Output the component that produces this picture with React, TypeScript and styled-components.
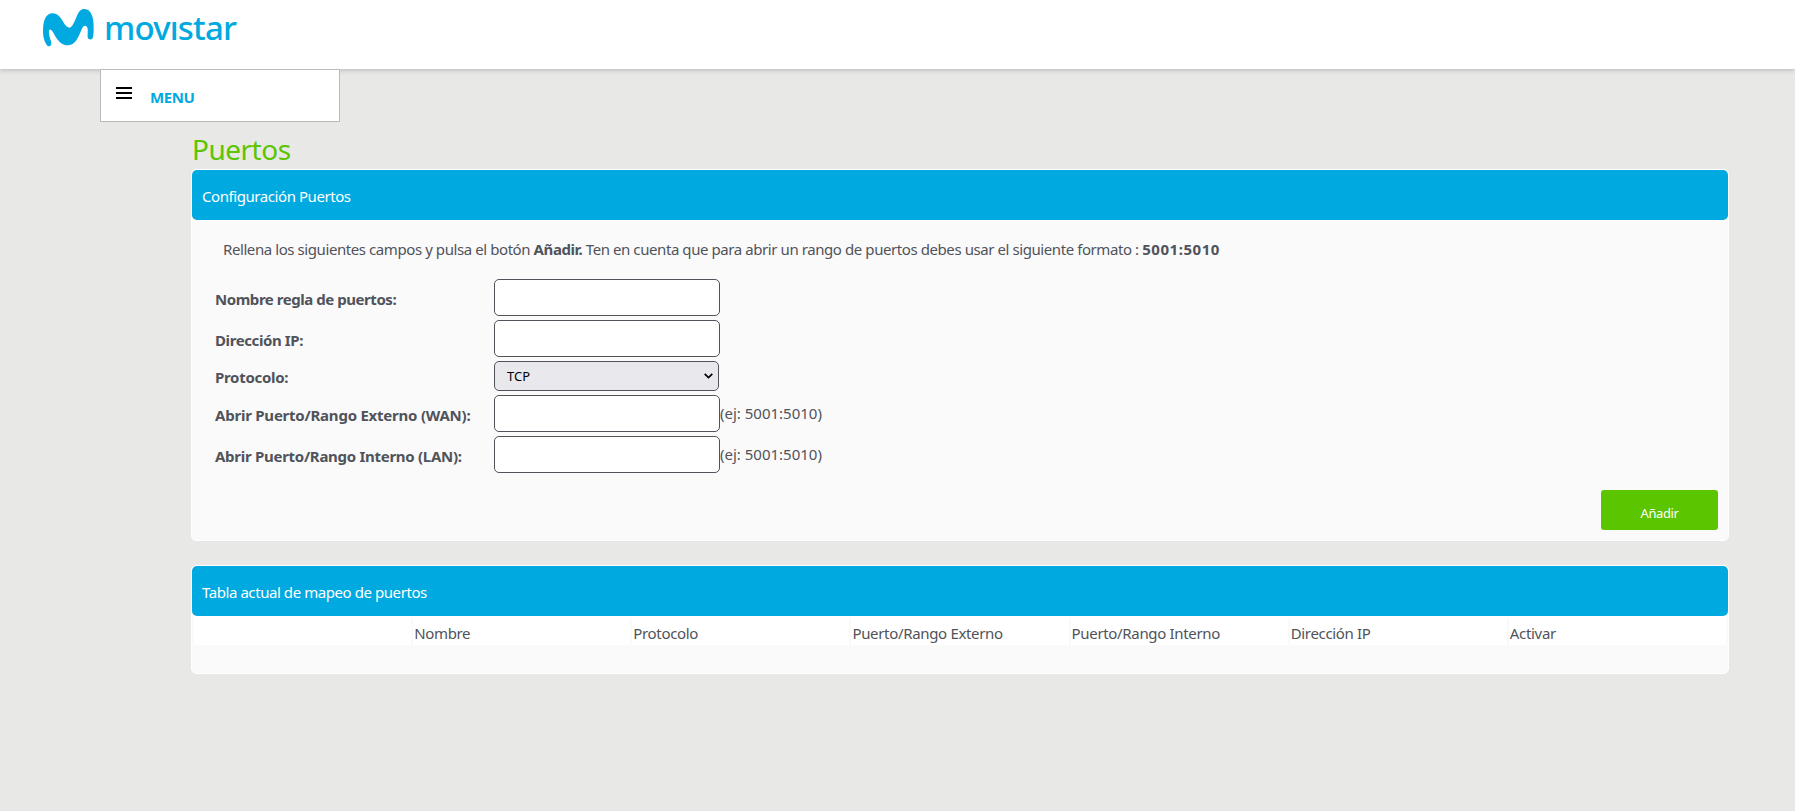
import React from "react";
import styled, { createGlobalStyle } from "styled-components";

const GlobalStyle = createGlobalStyle`
  * { box-sizing: border-box; }
  body {
    margin: 0;
    background: #e8e8e6;
    font-family: "Noto Sans", "Open Sans", sans-serif;
    font-size: 15px;
    color: #50535a;
  }
`;

const Page = styled.div`
  min-height: 811px;
`;

const TopBar = styled.header`
  height: 69px;
  display: flex;
  align-items: flex-start;
  padding: 0 0 0 42px;
  background: #fff;
  box-shadow: 0 1px 5px rgba(0, 0, 0, 0.22);
`;

const LogoMark = styled.svg`
  width: 54px;
  height: 48px;
  display: block;
`;

const Wordmark = styled.span`
  margin: 5px 0 0 8px;
  font-size: 33px;
  line-height: 45px;
  font-weight: 500;
  letter-spacing: -0.8px;
  color: #00a9e0;
`;

const MenuBox = styled.nav`
  position: relative;
  width: 240px;
  height: 53px;
  margin-left: 100px;
  padding: 0 0 0 15px;
  display: flex;
  background: #fff;
  border: 1px solid #bbb;
`;

const Burger = styled.span`
  width: 16px;
  height: 12px;
  margin-top: 17px;
  display: flex;
  flex-direction: column;
  justify-content: space-between;
  &::before, &::after { content: ""; }
  i, &::before, &::after { height: 2px; background: #000; }
`;

const MenuLabel = styled.span`
  margin: 16px 0 0 18px;
  font-weight: 700;
  line-height: 22px;
  letter-spacing: -0.4px;
  color: #00a9e0;
`;

const Main = styled.main`
  width: 1538px;
  margin-left: 191px;
`;

const Title = styled.h1`
  margin: 0;
  height: 47px;
  padding: 7px 0 0 1px;
  font-size: 28px;
  line-height: 40px;
  font-weight: 400;
  letter-spacing: -0.5px;
  color: #5bc500;
`;

const Panel = styled.section<{ $height: number }>`
  height: ${(p) => p.$height}px;
  margin-bottom: 24px;
  background: #fafafa;
  border: 1px solid #fff;
  border-radius: 5px;
`;

const PanelTitle = styled.h2`
  margin: 0;
  height: 50px;
  padding: 1px 0 0 10px;
  border-radius: 5px;
  background: #00a9e0;
  color: #fff;
  font-size: 15px;
  line-height: 50px;
  font-weight: 400;
  letter-spacing: -0.43px;
`;

const Intro = styled.p`
  margin: 0;
  padding: 17px 0 0 31px;
  height: 58px;
  line-height: 24px;
  letter-spacing: -0.42px;
  white-space: nowrap;
`;

const PortRange = styled.b`
  letter-spacing: 0.55px;
`;

const Field = styled.div<{ $short?: boolean }>`
  display: flex;
  align-items: flex-start;
  height: ${(p) => (p.$short ? 34 : 41)}px;
  padding-left: 23px;
`;

const Label = styled.label<{ $short?: boolean; $tracking?: number }>`
  width: 279px;
  padding-top: ${(p) => (p.$short ? 5 : 9)}px;
  line-height: 24px;
  font-weight: 700;
  letter-spacing: ${(p) => p.$tracking ?? -0.4}px;
  white-space: nowrap;
`;

const Input = styled.input`
  width: 226px;
  height: 37px;
  margin: 1px 0 0;
  background: #fff;
  border: 1px solid #50535a;
  border-radius: 5px;
`;

const Select = styled.div`
  width: 225px;
  height: 30px;
  margin-top: 1px;
  padding: 0 5px 0 12px;
  display: flex;
  align-items: center;
  justify-content: space-between;
  background: #e9e9ed;
  border: 1px solid #50535a;
  border-radius: 5px;
  color: #000;
  font-size: 13px;
`;

const Hint = styled.span`
  padding-top: 7px;
  line-height: 24px;
  letter-spacing: 0;
`;

const Actions = styled.div`
  display: flex;
  justify-content: flex-end;
  padding: 14px 10px 0 0;
`;

const AddButton = styled.button`
  width: 117px;
  height: 40px;
  padding: 6px 0 0;
  border: 0;
  border-radius: 3px;
  background: #5bc500;
  color: #fff;
  font: 400 13px "Noto Sans", sans-serif;
  letter-spacing: -0.4px;
`;

const HeadRow = styled.div`
  height: 27px;
  margin: 2px 2px 0;
  display: grid;
  grid-template-columns: repeat(7, 1fr);
  gap: 2px;
  box-shadow: 0 -2px 0 #fff;
`;

const HeadCell = styled.div`
  height: 27px;
  padding: 4px 0 0 1px;
  background: #fff;
  line-height: 22px;
  letter-spacing: -0.33px;
  white-space: nowrap;
`;

const columns = ["", "Nombre", "Protocolo", "Puerto/Rango Externo", "Puerto/Rango Interno", "Dirección IP", "Activar"];

export default function App() {
  return (
    <Page>
      <GlobalStyle />
      <TopBar>
        <LogoMark viewBox="126 0 162 144">
          <path
            fill="#00a9e0"
            d="M129 95C129 60 138 40 158 40C176 40 186 60 192 70C198 79 203 83 208 83C216 83 221 70 229 52C236 34 242 27 254 27C274 27 282 55 281 85C281 100 280 112 277 116C273 120 264 119 263 112C262 104 264 94 263 86C261 76 252 74 247 84C240 98 234 117 224 127C216 136 203 137 192 134C177 129 167 112 161 100C156 90 151 86 148 90C145 94 148 108 153 124C156 134 152 140 146 139C138 137 129 116 129 95Z"
          />
        </LogoMark>
        <Wordmark>movıstar</Wordmark>
      </TopBar>
      <MenuBox>
        <Burger><i /></Burger>
        <MenuLabel>MENU</MenuLabel>
      </MenuBox>
      <Main>
        <Title>Puertos</Title>
        <Panel $height={372}>
          <PanelTitle>Configuración Puertos</PanelTitle>
          <Intro>
            Rellena los siguientes campos y pulsa el botón <b>Añadir.</b> Ten en cuenta que para abrir un rango de
            puertos debes usar el siguiente formato : <PortRange>5001:5010</PortRange>
          </Intro>
          <Field><Label $tracking={-0.45}>Nombre regla de puertos:</Label><Input /></Field>
          <Field><Label>Dirección IP:</Label><Input /></Field>
          <Field $short>
            <Label $short $tracking={-0.3}>Protocolo:</Label>
            <Select>
              TCP
              <svg width="9" height="6" viewBox="0 0 9 6" fill="none" stroke="#000" strokeWidth="1.7">
                <path d="M0.7 0.8L4.5 4.6L8.3 0.8" />
              </svg>
            </Select>
          </Field>
          <Field><Label $tracking={-0.23}>Abrir Puerto/Rango Externo (WAN):</Label><Input /><Hint>(ej: 5001:5010)</Hint></Field>
          <Field><Label $tracking={-0.28}>Abrir Puerto/Rango Interno (LAN):</Label><Input /><Hint>(ej: 5001:5010)</Hint></Field>
          <Actions><AddButton>Añadir</AddButton></Actions>
        </Panel>
        <Panel $height={109}>
          <PanelTitle>Tabla actual de mapeo de puertos</PanelTitle>
          <HeadRow>{columns.map((c) => <HeadCell key={c}>{c}</HeadCell>)}</HeadRow>
        </Panel>
      </Main>
    </Page>
  );
}
